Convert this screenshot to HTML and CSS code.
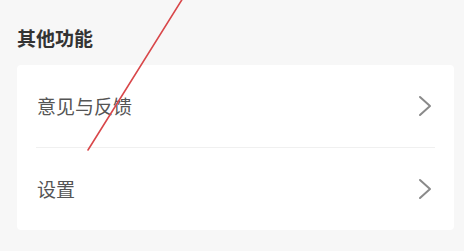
FILE: index.html
```html
<!DOCTYPE html>
<html lang="zh-CN">
<head>
<meta charset="utf-8">
<link rel="stylesheet" href="styles.css">
</head>
<body>
<div class="page">
  <h2 class="section-title">其他功能</h2>
  <div class="card">
    <div class="row">
      <span class="row-label">意见与反馈</span>
      <svg class="chevron" width="14" height="22" viewBox="0 0 14 22"><polyline points="2,2 12,11 2,20" fill="none" stroke="#8a8a8a" stroke-width="2" stroke-linecap="round" stroke-linejoin="round"/></svg>
    </div>
    <div class="divider"></div>
    <div class="row">
      <span class="row-label">设置</span>
      <svg class="chevron" width="14" height="22" viewBox="0 0 14 22"><polyline points="2,2 12,11 2,20" fill="none" stroke="#8a8a8a" stroke-width="2" stroke-linecap="round" stroke-linejoin="round"/></svg>
    </div>
  </div>
  <svg class="annotation" width="464" height="251" viewBox="0 0 464 251"><line x1="183" y1="-2" x2="88" y2="150" stroke="#d9474a" stroke-width="1.6" stroke-linecap="round"/></svg>
</div>
</body>
</html>
```
FILE: styles.css
```css
html, body {
  margin: 0;
  padding: 0;
}
body {
  background: #f7f7f7;
  font-family: "Noto Sans CJK SC", "Noto Sans", sans-serif;
  width: 464px;
  height: 251px;
  overflow: hidden;
}
.page {
  position: relative;
  width: 464px;
  height: 251px;
  padding-top: 25px;
  box-sizing: border-box;
}
.section-title {
  margin: 0 0 14px 0;
  padding-left: 17px;
  font-size: 19px;
  line-height: 26px;
  font-weight: 700;
  color: #333333;
}
.card {
  margin: 0 10px 0 17px;
  background: #ffffff;
  border-radius: 4px;
}
.row {
  height: 82px;
  display: flex;
  align-items: center;
  justify-content: space-between;
  padding: 0 22px 0 20px;
}
.row-label {
  font-size: 19px;
  line-height: 26px;
  color: #555555;
}
.chevron {
  display: block;
}
.divider {
  height: 1px;
  margin: 0 19px;
  background: #f0f0f0;
}
.annotation {
  position: absolute;
  left: 0;
  top: 0;
  pointer-events: none;
}
```
